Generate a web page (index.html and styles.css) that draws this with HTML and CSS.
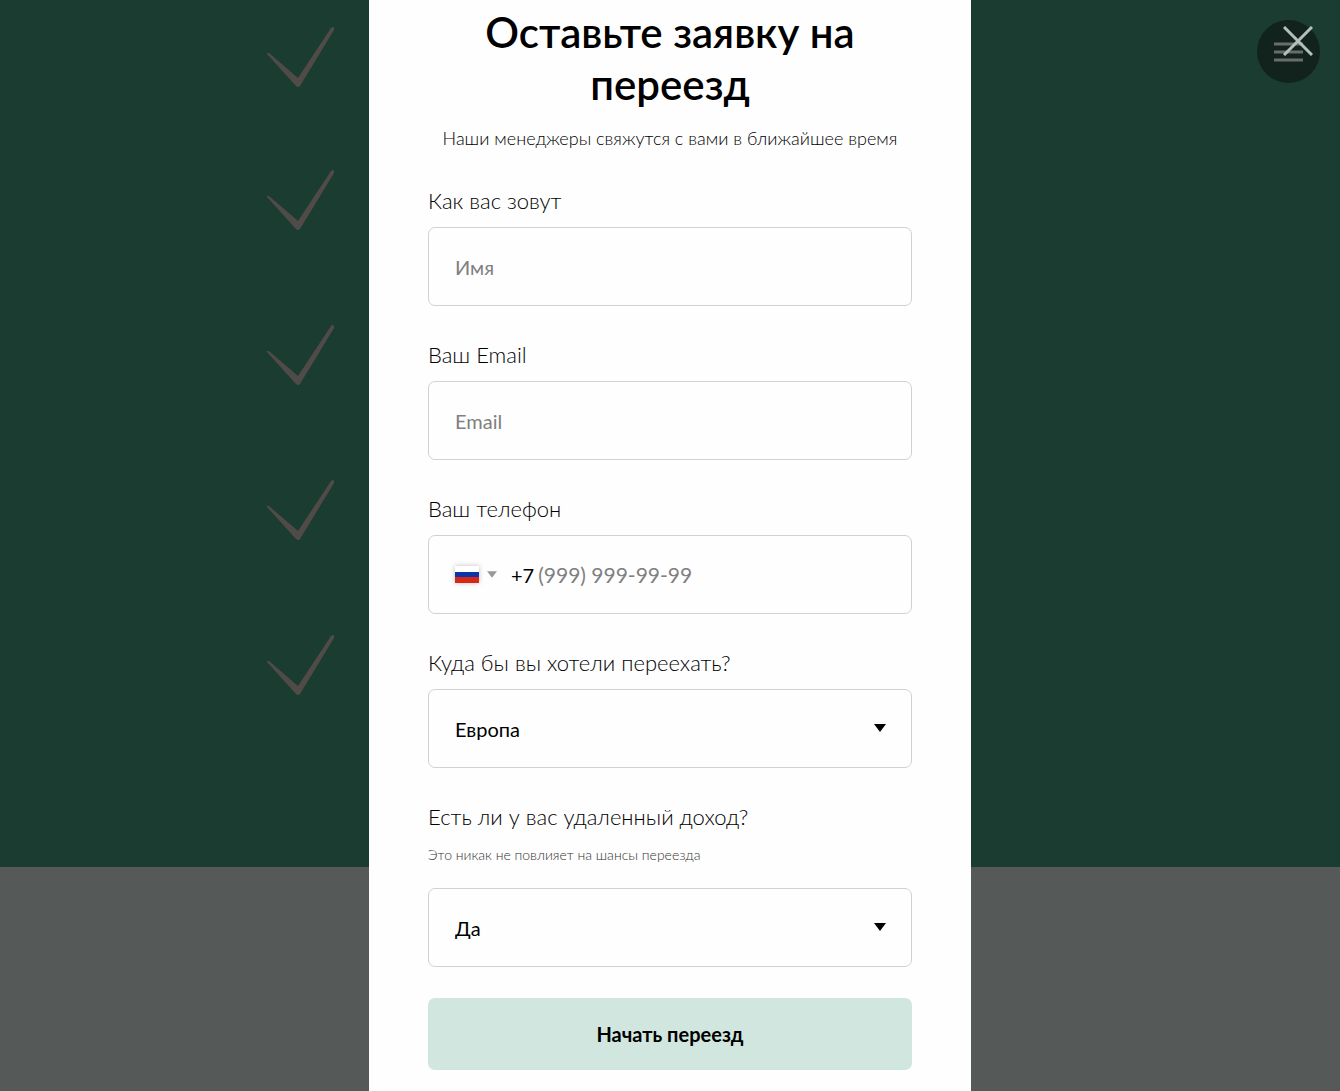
FILE: index.html
```html
<!DOCTYPE html>
<html lang="ru">
<head>
    <meta charset="UTF-8">
    <meta name="viewport" content="width=device-width, initial-scale=1.0">
    <title>Оставьте заявку на переезд</title>
    <link rel="stylesheet" href="styles.css">
</head>
<body>
    <svg class="sprite" aria-hidden="true">
        <symbol id="check" viewBox="0 0 69 62">
            <path d="M1 28Q1 26 3 27L32 52 65 2Q67 0 68 2L68 4 34 60Q32 62 30 60Z"/>
        </symbol>
        <symbol id="arrow" viewBox="0 0 12 8">
            <path d="M0 0h12L6 8z"/>
        </symbol>
    </svg>

    <main class="page">
        <section class="features">
            <ul class="checks">
                <li><svg><use href="#check"/></svg></li>
                <li><svg><use href="#check"/></svg></li>
                <li><svg><use href="#check"/></svg></li>
                <li><svg><use href="#check"/></svg></li>
                <li><svg><use href="#check"/></svg></li>
            </ul>
        </section>
    </main>

    <button class="menu-btn" type="button" aria-label="Меню">
        <svg width="29" height="20" viewBox="0 0 29 20">
            <path d="M0 2h29M0 10h29M0 18h29" stroke="#6a6b6b" stroke-width="3"/>
        </svg>
    </button>

    <div class="overlay">
        <div class="popup" role="dialog" aria-labelledby="popup-title">
            <h1 class="popup-title" id="popup-title">Оставьте заявку на переезд</h1>
            <p class="popup-text">Наши менеджеры свяжутся с вами в ближайшее время</p>

            <form class="form">
                <div class="field">
                    <label class="label" for="name">Как вас зовут</label>
                    <input class="control" type="text" id="name" placeholder="Имя">
                </div>
                <div class="field">
                    <label class="label" for="email">Ваш Email</label>
                    <input class="control" type="email" id="email" placeholder="Email">
                </div>
                <div class="field">
                    <label class="label" for="phone">Ваш телефон</label>
                    <div class="control phone">
                        <button class="country" type="button" aria-label="Россия">
                            <span class="flag"></span>
                            <svg class="country-arrow"><use href="#arrow"/></svg>
                        </button>
                        <span class="code">+7</span>
                        <input class="phone-input" type="tel" id="phone" placeholder="(999) 999-99-99">
                    </div>
                </div>
                <div class="field">
                    <label class="label" for="place">Куда бы вы хотели переехать?</label>
                    <div class="select">
                        <select class="control" id="place">
                            <option>Европа</option>
                        </select>
                        <svg class="select-arrow"><use href="#arrow"/></svg>
                    </div>
                </div>
                <div class="field">
                    <label class="label" for="income">Есть ли у вас удаленный доход?</label>
                    <p class="hint">Это никак не повлияет на шансы переезда</p>
                    <div class="select">
                        <select class="control" id="income">
                            <option>Да</option>
                        </select>
                        <svg class="select-arrow"><use href="#arrow"/></svg>
                    </div>
                </div>
                <button class="submit" type="submit">Начать переезд</button>
            </form>
        </div>
    </div>

    <button class="close-btn" type="button" aria-label="Закрыть">
        <svg width="30" height="30" viewBox="0 0 30 30">
            <path d="M1 1l28 28M29 1L1 29" stroke="#b3c0bb" stroke-width="3"/>
        </svg>
    </button>
</body>
</html>
```
FILE: styles.css
```css
* {
    box-sizing: border-box;
}
body {
    margin: 0;
    font-family: "Futura PT", Lato, sans-serif;
    color: #000;
    background: #555a58;
}
button,
input,
select {
    font-family: inherit;
    color: inherit;
}
.sprite {
    display: none;
}

/* Page behind the popup */
.features {
    padding: 26px 0 171px 266px;
    background: #1b3c30;
}
.checks {
    display: flex;
    flex-direction: column;
    gap: 93px;
    margin: 0;
    padding: 0;
    list-style: none;
}
.checks li:first-child {
    margin-bottom: -12px;
}
.checks svg {
    display: block;
    width: 69px;
    height: 62px;
    fill: #504b49;
}
.menu-btn {
    position: fixed;
    top: 20px;
    right: 20px;
    display: flex;
    align-items: center;
    justify-content: center;
    width: 63px;
    height: 63px;
    padding: 0;
    border: none;
    border-radius: 50%;
    background: #11231c;
}
.close-btn {
    position: fixed;
    top: 26px;
    right: 27px;
    padding: 0;
    border: none;
    background: none;
    cursor: pointer;
}
.close-btn svg {
    display: block;
}

/* Popup */
.overlay {
    position: fixed;
    inset: 0;
    display: flex;
    justify-content: center;
    align-items: flex-start;
    overflow: hidden;
}
.popup {
    width: 100%;
    max-width: 602px;
    min-height: 100%;
    padding: 6px 59px 32px;
    background: #fefefe;
}
.popup-title {
    margin: 0 0 14px;
    font-size: 42px;
    line-height: 52px;
    font-weight: 600;
    text-align: center;
}
.popup-text {
    margin: 0 0 34px;
    font-size: 18px;
    line-height: 28px;
    font-weight: 300;
    text-align: center;
}

/* Form */
.form {
    display: flex;
    flex-direction: column;
    gap: 35px;
}
.label {
    display: block;
    margin-bottom: 11px;
    font-size: 22px;
    line-height: 30px;
    font-weight: 300;
}
.field + .field {
    margin-top: -1px;
}
.hint {
    margin: 0 0 21px;
    font-size: 14px;
    line-height: 24px;
    font-weight: 300;
    color: #333;
}
.control {
    display: block;
    width: 100%;
    height: 79px;
    padding: 0 26px;
    border: 1px solid #d1d1d1;
    border-radius: 7px;
    background: none;
    font-size: 20px;
    outline: none;
    appearance: none;
}
.control::placeholder,
.phone-input::placeholder {
    color: #808080;
    opacity: 1;
}
.phone {
    display: flex;
    align-items: center;
}
.country {
    display: flex;
    align-items: center;
    gap: 8px;
    margin-right: 14px;
    padding: 0;
    border: none;
    background: none;
}
.flag {
    width: 24px;
    height: 17px;
    background: linear-gradient(#fff 33%, #0b36a8 33% 66%, #d82718 66%);
    box-shadow: 0 0 5px rgba(0, 0, 0, 0.25);
}
.country-arrow {
    width: 10px;
    height: 7px;
    fill: #999;
}
.code {
    margin-right: 4px;
}
.phone-input {
    flex: 1;
    min-width: 0;
    padding: 0;
    border: none;
    background: none;
    font-size: 21px;
    outline: none;
}
.select {
    position: relative;
}
.select-arrow {
    position: absolute;
    top: 35px;
    right: 26px;
    width: 12px;
    height: 8px;
    pointer-events: none;
}
.submit {
    height: 72px;
    margin-top: -4px;
    border: none;
    border-radius: 7px;
    background: #d0e6de;
    font-size: 20px;
    font-weight: 700;
    cursor: pointer;
}
```
